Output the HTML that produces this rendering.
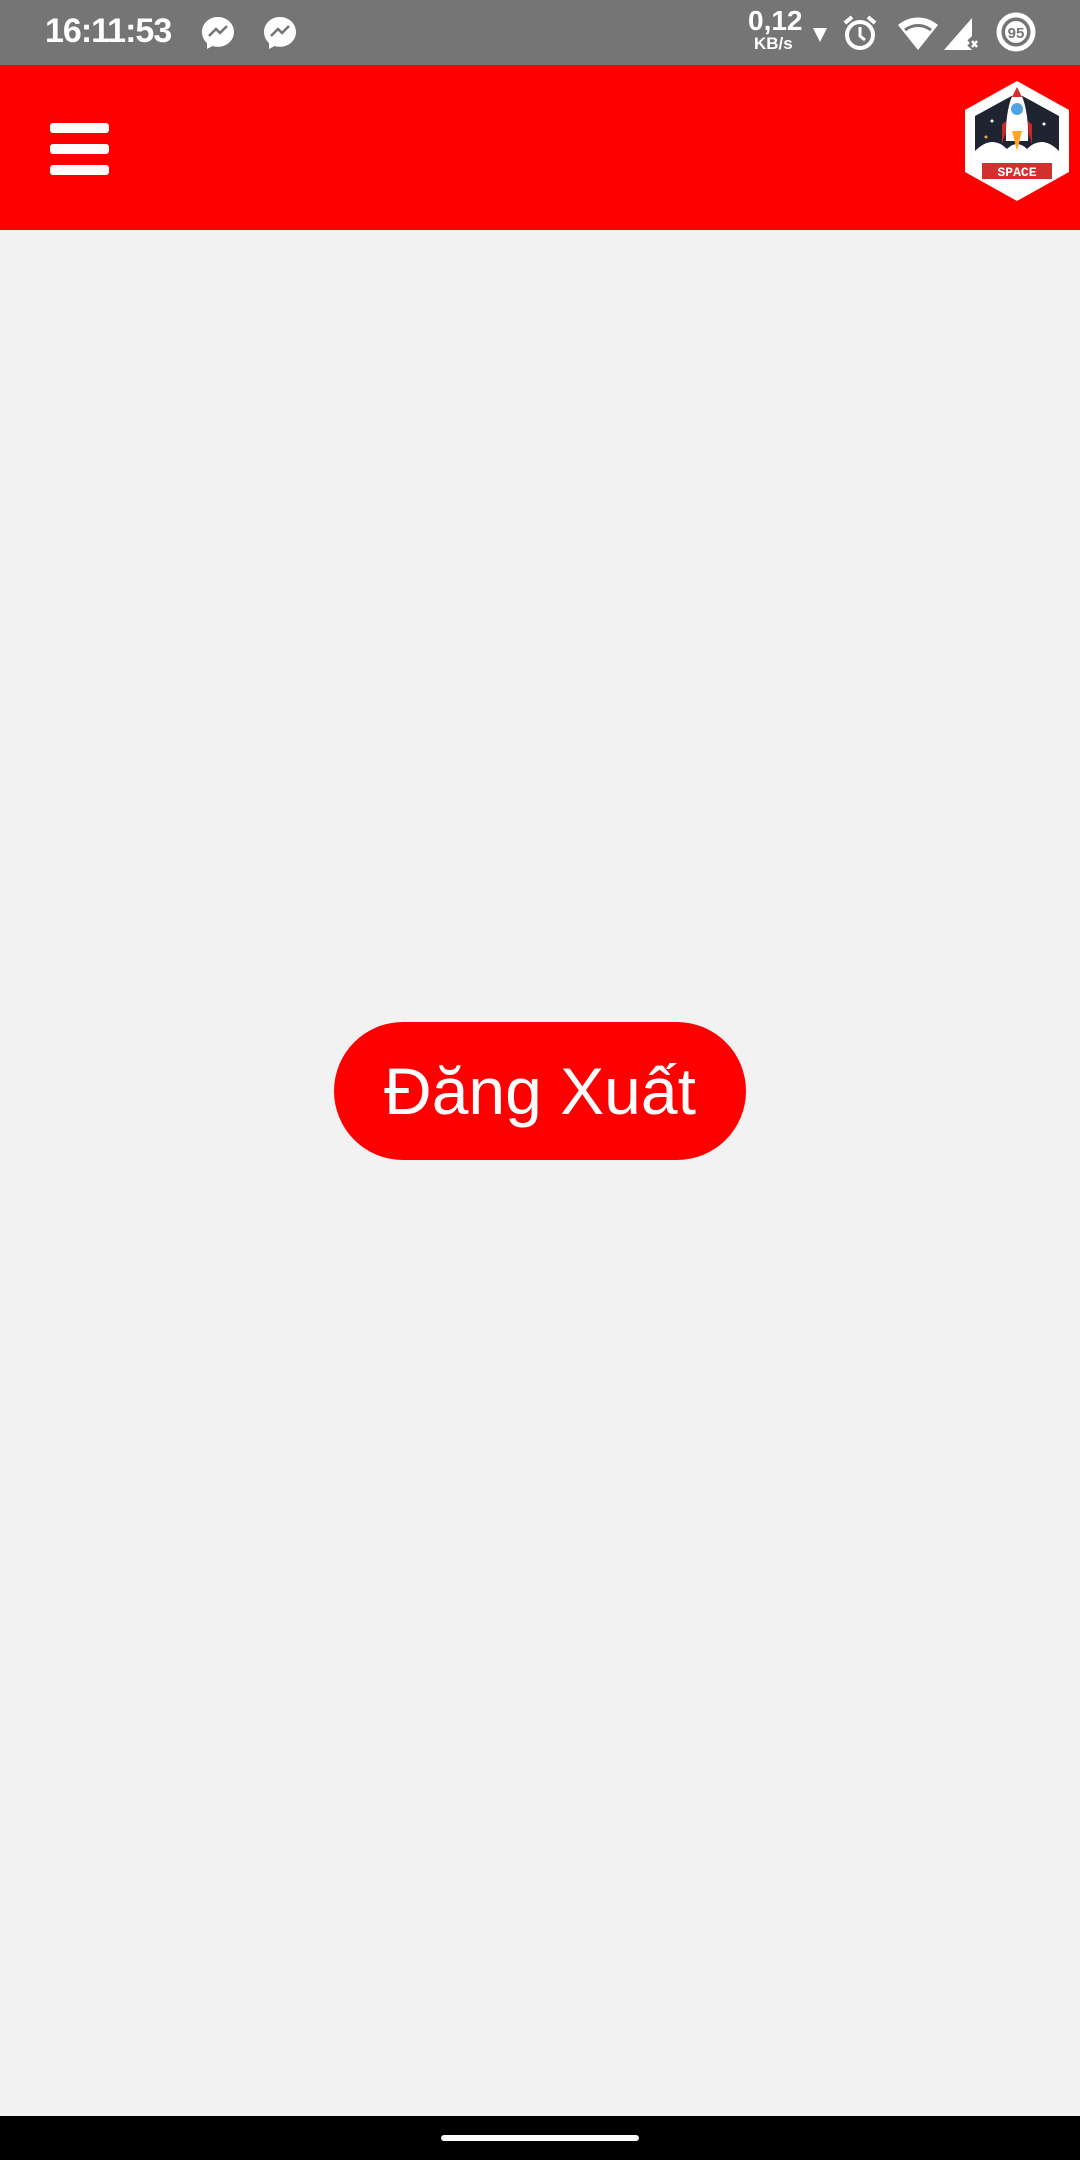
<!DOCTYPE html>
<html><head><meta charset="utf-8"><style>
*{margin:0;padding:0;box-sizing:border-box}
body{width:1080px;height:2160px;background:#f2f2f2;position:relative;overflow:hidden;font-family:"Liberation Sans",sans-serif}
.sb{position:absolute;top:0;left:0;width:1080px;height:65px;background:#757575;color:#fff}
.hdr{position:absolute;top:65px;left:0;width:1080px;height:165px;background:#ff0000}
.bar{position:absolute;left:50px;width:59px;height:10px;background:#fff;border-radius:3px}
.btn{position:absolute;left:334px;top:1022px;width:412px;height:138px;border-radius:69px;background:#ff0000;color:#fff;font-size:66px;text-align:center;line-height:138px}
.nav{position:absolute;left:0;top:2116px;width:1080px;height:44px;background:#000}
.pill{position:absolute;left:441px;top:2135px;width:198px;height:6px;border-radius:3px;background:#fff}
</style></head><body>
<div class="sb">
<div style="position:absolute;left:45px;top:12px;font-size:34px;font-weight:bold;letter-spacing:-1px">16:11:53</div>
<svg style="position:absolute;left:200px;top:15px" width="36" height="36" viewBox="0 0 36 36"><path d="M18 2C9 2 2 8.5 2 17c0 4.5 2 8.5 5 11v6l5.5-3c1.8.5 3.6.8 5.5.8 9 0 16-6.6 16-14.8S27 2 18 2z" fill="#fff"/><path d="M9 21l7-7 4 4 7-7-7 7-4-4z" stroke="#757575" stroke-width="2.5" fill="none"/></svg>
<svg style="position:absolute;left:262px;top:15px" width="36" height="36" viewBox="0 0 36 36"><path d="M18 2C9 2 2 8.5 2 17c0 4.5 2 8.5 5 11v6l5.5-3c1.8.5 3.6.8 5.5.8 9 0 16-6.6 16-14.8S27 2 18 2z" fill="#fff"/><path d="M9 21l7-7 4 4 7-7-7 7-4-4z" stroke="#757575" stroke-width="2.5" fill="none"/></svg>
<div style="position:absolute;left:748px;top:8px;font-size:28px;font-weight:bold;line-height:26px">0,12</div>
<div style="position:absolute;left:754px;top:34px;font-size:17px;font-weight:bold">KB/s</div>
<div style="position:absolute;left:813px;top:28px;width:0;height:0;border-left:7px solid transparent;border-right:7px solid transparent;border-top:14px solid #fff"></div>
<svg style="position:absolute;left:842px;top:14px" width="36" height="38" viewBox="0 0 36 38"><circle cx="18" cy="21" r="13" fill="none" stroke="#fff" stroke-width="4"/><path d="M18 13v9l5 4" stroke="#fff" stroke-width="3" fill="none"/><path d="M3 9l7-6M33 9l-7-6" stroke="#fff" stroke-width="4"/></svg>
<svg style="position:absolute;left:896px;top:16px" width="44" height="36" viewBox="0 0 44 36"><path d="M2 9C14-1 30-1 42 9L22 34z" fill="#fff"/><path d="M9 14c8-6 18-6 26 0" stroke="#757575" stroke-width="3" fill="none"/></svg>
<svg style="position:absolute;left:942px;top:16px" width="40" height="36" viewBox="0 0 40 36"><path d="M30 2v32H2z" fill="#fff"/><path d="M28 22l9 10M37 22l-9 10" stroke="#757575" stroke-width="7"/><path d="M30 25l5 6M35 25l-5 6" stroke="#fff" stroke-width="2.5"/></svg>
<svg style="position:absolute;left:996px;top:12px" width="40" height="40" viewBox="0 0 40 40"><circle cx="20" cy="20" r="17" fill="none" stroke="#fff" stroke-width="5"/><circle cx="20" cy="20" r="11" fill="#fff"/><text x="20" y="26" font-size="15" font-weight="bold" fill="#757575" text-anchor="middle" font-family="Liberation Sans">95</text></svg>
</div>
<div class="hdr">
<div class="bar" style="top:58px"></div><div class="bar" style="top:79px"></div><div class="bar" style="top:100px"></div>
<svg style="position:absolute;left:962px;top:14px" width="110" height="124" viewBox="0 0 110 124">
<polygon points="55,2 107,31 107,93 55,122 3,93 3,31" fill="#fff"/>
<polygon points="55,14 97,37 97,72 13,72 13,37" fill="#1e2530"/>
<path d="M13 72 Q30 55 45 70 Q55 60 65 70 Q80 55 97 72 L97 88 L13 88z" fill="#fff"/>
<path d="M40 65 L40 45 L48 40z M70 65 L70 45 L62 40z" fill="#c62828"/>
<path d="M55 8 Q67 25 66 62 L44 62 Q43 25 55 8z" fill="#fff"/>
<path d="M50 18 L55 8 L60 18z" fill="#d32f2f"/>
<circle cx="55" cy="30" r="6" fill="#4fa3e0"/>
<path d="M50 52 L60 52 L55 72z" fill="#ffa726"/>
<rect x="20" y="84" width="70" height="16" fill="#d32f2f"/>
<text x="55" y="97" font-size="13" font-weight="bold" fill="#fff" text-anchor="middle" font-family="Liberation Mono">SPACE</text>
<circle cx="30" cy="42" r="1.5" fill="#fff"/><circle cx="82" cy="45" r="1.5" fill="#fff"/><circle cx="24" cy="58" r="1.5" fill="#f0a050"/><circle cx="88" cy="30" r="1.2" fill="#fff"/>
</svg>
</div>
<div class="btn">Đăng Xuất</div>
<div class="nav"></div><div class="pill"></div>
</body></html>
